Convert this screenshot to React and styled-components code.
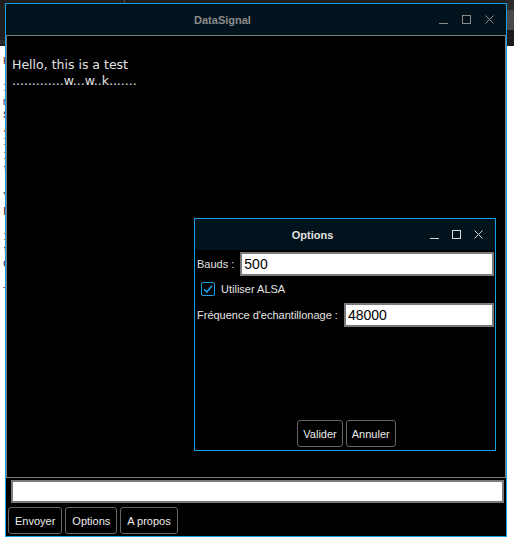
import React from 'react'
import styled, { createGlobalStyle } from 'styled-components'

const GlobalStyle = createGlobalStyle`
  html, body {
    margin: 0;
    padding: 0;
    background: #ffffff;
  }
  body {
    font-family: "Liberation Sans", Arial, sans-serif;
  }
`

const blue = '#17a0e6'
const titleBg = '#02131d'

const Desktop = styled.div`
  position: relative;
  width: 514px;
  height: 541px;
  overflow: hidden;
  background: #ffffff;
`

const TopPanel = styled.div`
  display: flex;
  height: 46px;
  background: #1f1f1f;
`

const PanelLeft = styled.div`
  width: 124px;
  border-right: 1px solid #4a4a4a;
  display: flex;
  flex-direction: column;
  justify-content: flex-end;

  &::after {
    content: '';
    height: 4px;
    background: #2e2e2e;
    margin-bottom: 2px;
  }
`

const PanelFill = styled.div`
  flex: 1;
`

const PanelRight = styled.div`
  width: 7px;
  display: flex;
  flex-direction: column;
`

const PanelStripe = styled.div`
  height: ${p => p.h}px;
  background: ${p => p.c};
`

const Terminal = styled.pre`
  margin: 0;
  padding: 9px 0 0 3px;
  font-family: "Liberation Mono", "DejaVu Sans Mono", monospace;
  font-size: 11px;
  line-height: 13.5px;
  color: #1a1a5c;
`

const TermChar = styled.span`
  color: ${p => p.c};
`

const Window = styled.div`
  position: absolute;
  left: ${p => p.x}px;
  top: ${p => p.y}px;
  width: ${p => p.w}px;
  height: ${p => p.h}px;
  box-sizing: border-box;
  border: 1px solid ${blue};
  background: #000000;
  display: flex;
  flex-direction: column;
`

const TitleBar = styled.div`
  height: 31px;
  flex: none;
  background: ${titleBg};
  display: flex;
  align-items: center;
  padding-right: 12px;
`

const Title = styled.div`
  flex: 1;
  text-align: center;
  font-family: "Liberation Sans", Arial, sans-serif;
  font-weight: bold;
  font-size: 11px;
  color: ${p => (p.active ? '#e2e2e2' : '#8a8a8a')};
`

const Controls = styled.div`
  display: flex;
  gap: ${p => p.gap}px;
  align-items: center;
`

const Icon = styled.svg`
  display: block;
  width: 9px;
  height: 9px;
  stroke: ${p => (p.active ? '#d8d8d8' : '#8a8a8a')};
  fill: none;
`

const WindowControls = ({ active, gap }) => (
  <Controls gap={gap}>
    <Icon active={active} viewBox="0 0 9 9">
      <line x1="0" y1="8.5" x2="9" y2="8.5" strokeWidth="1" />
    </Icon>
    <Icon active={active} viewBox="0 0 9 9">
      <rect x="0.5" y="0.5" width="8" height="8" strokeWidth="1" />
    </Icon>
    <Icon active={active} viewBox="0 0 9 9">
      <line x1="0.5" y1="0.5" x2="8.5" y2="8.5" strokeWidth="1" />
      <line x1="8.5" y1="0.5" x2="0.5" y2="8.5" strokeWidth="1" />
    </Icon>
  </Controls>
)

const Output = styled.pre`
  flex: 1;
  margin: 0;
  box-sizing: border-box;
  border: 1px solid #7c7c7c;
  background: #000000;
  padding: 5px 0 0 5px;
  font-family: "DejaVu Sans", sans-serif;
  font-size: 12.5px;
  line-height: 16px;
  color: #e2e2e2;
  white-space: pre;
`

const SendInput = styled.input`
  flex: none;
  height: 23px;
  box-sizing: border-box;
  margin: 2px 2px 0 5px;
  border: 2px solid #7a7a7a;
  background: #ffffff;
  outline: none;
`

const ButtonRow = styled.div`
  display: flex;
  gap: 3px;
  margin: 4px 0 2px 2px;
  justify-content: ${p => (p.center ? 'center' : 'flex-start')};
`

const Button = styled.button`
  height: 27px;
  padding: 0 ${p => p.pad || 6}px;
  box-sizing: border-box;
  background: #000000;
  color: #ececec;
  border: 1px solid #666666;
  border-radius: 3px;
  font-family: "Liberation Sans", Arial, sans-serif;
  font-size: 11px;
  cursor: pointer;
`

const DialogBody = styled.div`
  flex: 1;
  display: flex;
  flex-direction: column;
  padding: 2px 1px 1px 2px;
`

const FieldRow = styled.div`
  display: flex;
  align-items: center;
  gap: 6px;
`

const Label = styled.label`
  font-family: "Liberation Sans", Arial, sans-serif;
  font-size: 11px;
  color: #e4e4e4;
  white-space: nowrap;
`

const TextField = styled.input`
  flex: 1;
  min-width: 0;
  height: 24px;
  box-sizing: border-box;
  border: 2px solid #7a7a7a;
  background: #ffffff;
  padding: 0 2px;
  font-family: "Liberation Sans", Arial, sans-serif;
  font-size: 14px;
  color: #000000;
  outline: none;
`

const CheckRow = styled.div`
  display: flex;
  align-items: center;
  gap: 6px;
  height: 20px;
  margin: 3px 0 4px 4px;
`

const CheckBox = styled.div`
  width: 14px;
  height: 14px;
  box-sizing: border-box;
  border: 1px solid ${blue};
  border-radius: 2px;
  background: #000000;
  display: flex;
  align-items: center;
  justify-content: center;
`

const Spacer = styled.div`
  flex: 1;
`

const termLines = [
  ['H', '#6b1c1c'],
  null,
  ['I', '#7a3a14'],
  ['m', '#1c1c66'],
  ['S', '#1c1c66'],
  ['/', '#e02424'],
  ['I', '#7a3a14'],
  ['I', '#7a3a14'],
  ['t', '#1c1c66'],
  null,
  ['Y', '#1c1c66'],
  ['p', '#6b1c1c'],
  null,
  ['I', '#7a3a14'],
  ['t', '#1c1c66'],
  ['G', '#1c1c66'],
  null,
  ['T', '#6b1c1c'],
]

export default function App() {
  return (
    <>
      <GlobalStyle />
      <Desktop>
        <TopPanel>
          <PanelLeft />
          <PanelFill />
          <PanelRight>
            <PanelStripe h={10} c="#2b2b2b" />
            <PanelStripe h={20} c="#4a4a4a" />
            <PanelStripe h={16} c="#1c1c1c" />
          </PanelRight>
        </TopPanel>
        <Terminal>
          {termLines.map((l, i) => (
            <div key={i}>{l ? <TermChar c={l[1]}>{l[0]}</TermChar> : ' '}</div>
          ))}
        </Terminal>

        <Window x={5} y={3} w={502} h={534}>
          <TitleBar>
            <Title>DataSignal</Title>
            <WindowControls gap={14} />
          </TitleBar>
          <Output>{'\nHello, this is a test\n.............w...w..k.......'}</Output>
          <SendInput type="text" />
          <ButtonRow>
            <Button>Envoyer</Button>
            <Button>Options</Button>
            <Button>A propos</Button>
          </ButtonRow>
        </Window>

        <Window x={194} y={218} w={302} h={233}>
          <TitleBar>
            <Title active>Options</Title>
            <WindowControls active gap={13} />
          </TitleBar>
          <DialogBody>
            <FieldRow>
              <Label>Bauds :</Label>
              <TextField type="text" defaultValue="500" />
            </FieldRow>
            <CheckRow>
              <CheckBox>
                <svg width="10" height="10" viewBox="0 0 10 10">
                  <polyline points="1,5.2 3.8,8 9,1.8" fill="none" stroke={blue} strokeWidth="1.6" />
                </svg>
              </CheckBox>
              <Label>Utiliser ALSA</Label>
            </CheckRow>
            <FieldRow>
              <Label>Fréquence d'echantillonage :</Label>
              <TextField type="text" defaultValue="48000" />
            </FieldRow>
            <Spacer />
            <ButtonRow center>
              <Button pad={5}>Valider</Button>
              <Button pad={5}>Annuler</Button>
            </ButtonRow>
          </DialogBody>
        </Window>
      </Desktop>
    </>
  )
}
